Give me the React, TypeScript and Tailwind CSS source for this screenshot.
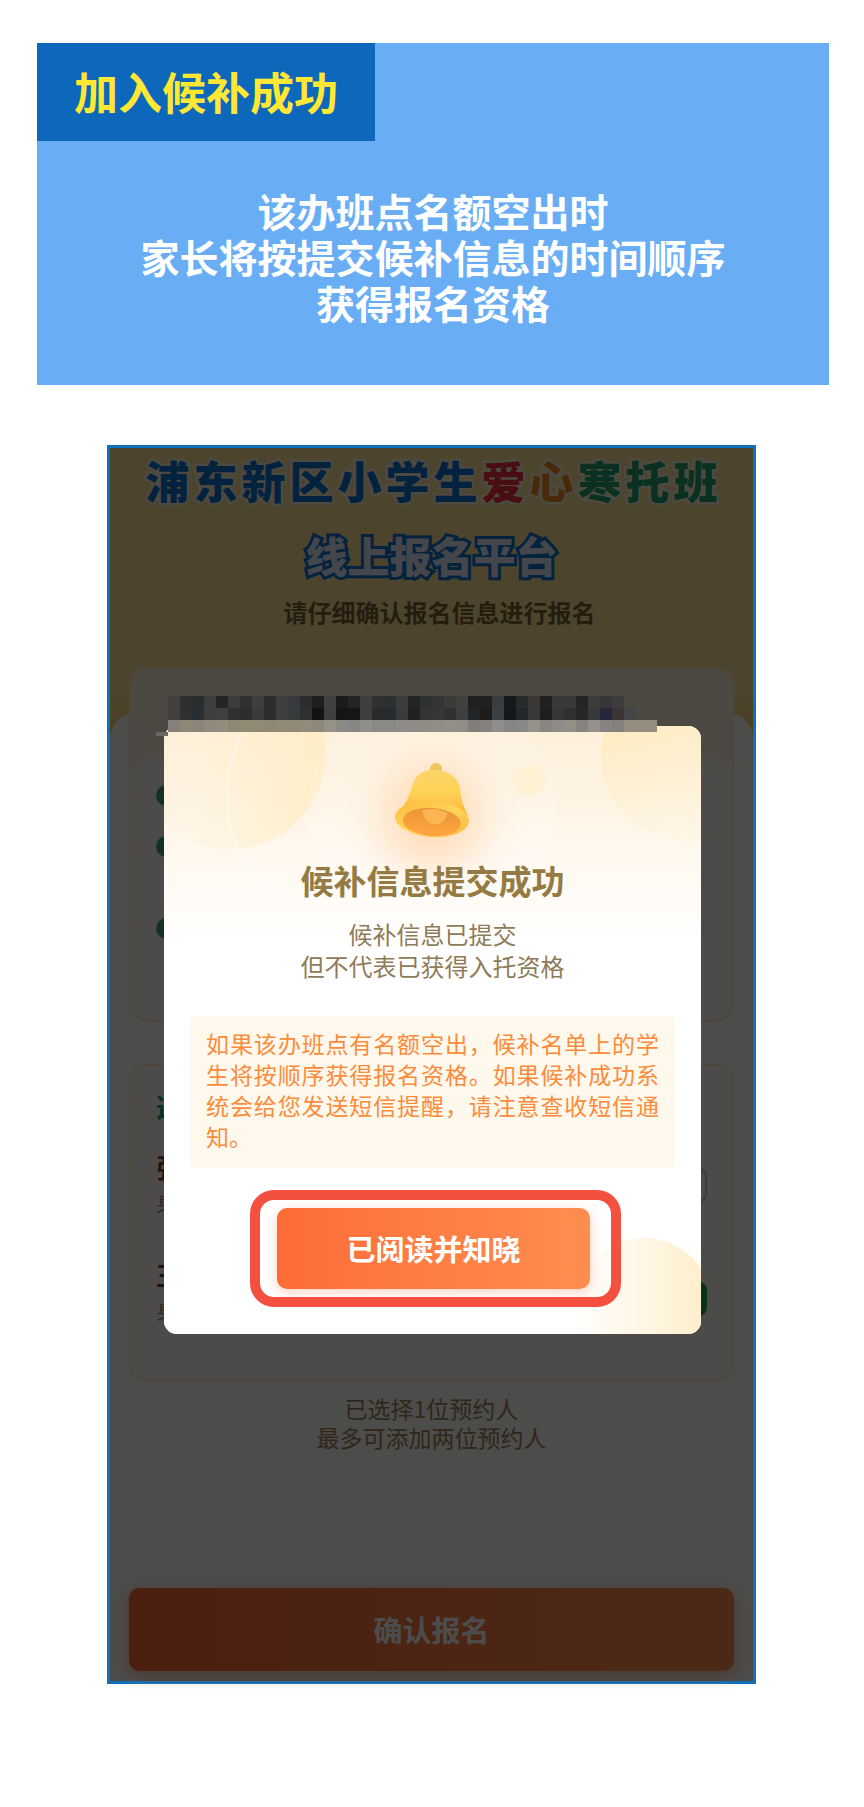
import { Check } from "lucide-react";

const SITE_TITLE: { char: string; color: string }[] = [
  { char: "浦", color: "text-[#0a72d0]" },
  { char: "东", color: "text-[#0a72d0]" },
  { char: "新", color: "text-[#0a72d0]" },
  { char: "区", color: "text-[#0a72d0]" },
  { char: "小", color: "text-[#0a72d0]" },
  { char: "学", color: "text-[#0a72d0]" },
  { char: "生", color: "text-[#0a72d0]" },
  { char: "爱", color: "text-[#f0303c]" },
  { char: "心", color: "text-[#f08a20]" },
  { char: "寒", color: "text-[#20a070]" },
  { char: "托", color: "text-[#20a070]" },
  { char: "班", color: "text-[#20a070]" },
];

const MOSAIC_ROWS: string[][] = [
  [
    "#434140", "#2f2e2d", "#282d30", "#3f3e3c", "#232426", "#3b3c3c", "#303030", "#403f3c", "#2c2d2e", "#3f3f3d",
    "#383b3d", "#2d2b2b", "#1f1f1f", "#434140", "#1c1b1b", "#242525", "#403e3c", "#303031", "#2b3033", "#3c3c3b",
    "#242424", "#2d3130", "#343434", "#3a3a39", "#41403d", "#1f2021", "#212121", "#3a3e40", "#17181a", "#282b2c",
    "#3a3735", "#212121", "#363a3c", "#3a3938", "#252526", "#3c3c3b", "#36373a", "#3c3c3e",
  ],
  [
    "#434140", "#31302f", "#272f34", "#403e3d", "#3d4144", "#31302f", "#2d2d2c", "#3d3b38", "#2b2d2f", "#403f3d",
    "#383b3d", "#30302f", "#131312", "#403f3e", "#161514", "#14171a", "#403e3c", "#272b2e", "#252b30", "#3a3b3a",
    "#202221", "#333434", "#383635", "#32312f", "#403f3d", "#20252a", "#201c1a", "#3a4043", "#151617", "#25282b",
    "#3a3837", "#1e1e1e", "#33373a", "#31302f", "#272727", "#38393a", "#242639", "#3b3536", "#444748",
  ],
  [
    "#84817c", "#8e8879", "#8a8578", "#908a7c", "#918b80", "#8d8775", "#908974", "#908974", "#8e8773", "#918a75",
    "#908976", "#918b7a", "#8e887b", "#949189", "#8b8a87", "#858686", "#918d88", "#8b8986", "#898988", "#8f8c88",
    "#8c8b88", "#908c85", "#918e88", "#928e88", "#928e87", "#827f7b", "#85827e", "#8f8d8b", "#858585", "#878787",
    "#96928a", "#898682", "#8d8c8b", "#949088", "#86837f", "#96918a", "#858483", "#828180", "#958e7e", "#958e7e", "#958e7e",
  ],
];

function BellIcon() {
  return (
    <svg width="80" height="80" viewBox="0 0 80 80" aria-hidden="true">
      <defs>
        <linearGradient id="bellBody" x1="0" y1="0" x2="0" y2="1">
          <stop offset="0" stopColor="#fbd46c" />
          <stop offset="0.5" stopColor="#fed354" />
          <stop offset="1" stopColor="#fdb03e" />
        </linearGradient>
        <linearGradient id="bellRim" x1="0" y1="0" x2="1" y2="1">
          <stop offset="0" stopColor="#fdb93c" />
          <stop offset="0.5" stopColor="#ffd457" />
          <stop offset="1" stopColor="#fdb53d" />
        </linearGradient>
        <linearGradient id="bellInner" x1="0" y1="0" x2="0" y2="1">
          <stop offset="0" stopColor="#ec9538" />
          <stop offset="1" stopColor="#ffa63f" />
        </linearGradient>
      </defs>
      <circle cx="43" cy="9" r="6" fill="#f2c45c" />
      <path d="M19 26C22 14 31 9 43 10C56 11 65 17 67 28C68 38 70 46 75 56L5 52C13 45 16 36 19 26Z" fill="url(#bellBody)" />
      <g transform="rotate(4 40 59)">
        <ellipse cx="39" cy="59" rx="37" ry="18" fill="url(#bellRim)" />
        <ellipse cx="39" cy="62" rx="29" ry="14" fill="url(#bellInner)" />
        <path d="M29 51Q40 47 54 52C53 60 48 64 42 64C35 64 30 59 29 51Z" fill="#fdb453" />
      </g>
    </svg>
  );
}

function DialogBackdrop() {
  return (
    <svg
      className="absolute inset-0 h-full w-full"
      viewBox="0 0 537 608"
      preserveAspectRatio="none"
      aria-hidden="true"
    >
      <defs>
        <linearGradient id="warm" x1="0" y1="0" x2="0" y2="1">
          <stop offset="0" stopColor="#fef0d9" />
          <stop offset="0.1" stopColor="#fef3e2" />
          <stop offset="0.24" stopColor="#fffaf2" />
          <stop offset="0.36" stopColor="#ffffff" />
        </linearGradient>
        <linearGradient id="discLeft" x1="0" y1="0" x2="1" y2="0">
          <stop offset="0.3" stopColor="#ffeecb" stopOpacity="0.1" />
          <stop offset="1" stopColor="#ffedc6" />
        </linearGradient>
        <linearGradient id="discRight" x1="0.3" y1="0.3" x2="0.5" y2="1">
          <stop offset="0" stopColor="#ffecc4" />
          <stop offset="1" stopColor="#fff2d8" stopOpacity="0.2" />
        </linearGradient>
        <linearGradient id="discBottom" x1="0" y1="0" x2="1" y2="0">
          <stop offset="0" stopColor="#ffeecb" stopOpacity="0" />
          <stop offset="0.95" stopColor="#ffeecb" />
        </linearGradient>
        <radialGradient id="bellGlow">
          <stop offset="0" stopColor="#ffcf9c" stopOpacity="0.9" />
          <stop offset="0.5" stopColor="#ffdcb8" stopOpacity="0.5" />
          <stop offset="0.8" stopColor="#ffe6cc" stopOpacity="0.12" />
          <stop offset="1" stopColor="#ffe6cc" stopOpacity="0" />
        </radialGradient>
      </defs>
      <rect width="537" height="608" fill="url(#warm)" />
      <circle cx="66" cy="27" r="96" fill="url(#discLeft)" />
      <circle cx="521" cy="31" r="84" fill="url(#discRight)" />
      <circle cx="365" cy="54" r="16" fill="#fff0cd" />
      <circle cx="268" cy="84" r="124" fill="#ffffff" fillOpacity="0.12" />
      <circle cx="268" cy="90" r="92" fill="url(#bellGlow)" />
      <path d="M82 0C48 60 60 128 110 172" fill="none" stroke="#ffffff" strokeOpacity="0.3" strokeWidth="3" />
      <circle cx="480" cy="581" r="69" fill="url(#discBottom)" />
    </svg>
  );
}

function Mosaic() {
  return (
    <svg className="absolute -top-[30px] -left-2" width="504" height="40" viewBox="-12 0 504 40" aria-hidden="true">
      <rect x="-12" y="36" width="12" height="4" fill="#6a6863" />
      {MOSAIC_ROWS.map((row, y) =>
        row.map((fill, x) => (
          <rect key={`${x}-${y}`} x={x * 12} y={y * 12} width={x === 40 ? 9 : 12} height="12" fill={fill} />
        )),
      )}
    </svg>
  );
}

function Notice() {
  return (
    <section className="bg-[#69aef5] pb-[60px]">
      <h1 className="flex h-[98px] w-fit items-center bg-[#0d67bb] px-[37px] pb-[3px] text-[44px] font-bold text-[#ffe833]">
        加入候补成功
      </h1>
      <p className="mt-[46px] text-center text-[39px] leading-[46px] font-bold text-white">
        该办班点名额空出时
        <br />
        家长将按提交候补信息的时间顺序
        <br />
        获得报名资格
      </p>
    </section>
  );
}

function SignupPage() {
  return (
    <div className="bg-[#fefefa]">
      <header className="h-[290px] bg-linear-to-b from-[#fde398] from-85% to-[#fdc870] pt-1 text-center">
        <h2 className="flex justify-center gap-1 text-[44px] leading-[56px] font-black">
          {SITE_TITLE.map(({ char, color }) => (
            <span key={char} className={`${color} [paint-order:stroke] [-webkit-text-stroke:5px_#fff3d8]`}>
              {char}
            </span>
          ))}
        </h2>
        <p className="mt-[19px] text-[42px] leading-[56px] font-black text-[#e4ecff] [paint-order:stroke] [-webkit-text-stroke:6px_#0a72d0]">
          线上报名平台
        </p>
        <p className="mt-3 pl-4 text-[24px] leading-[34px] font-bold text-[#80602c]">请仔细确认报名信息进行报名</p>
      </header>

      <main className="-mt-6 rounded-t-3xl bg-[#fefefa] px-[19px] pb-[10px]">
        <section className="relative -top-[47px] -mb-[47px] rounded-[20px] border-2 border-[#fdecd2] bg-[#fdf0dc] pt-[88px]">
          <div className="h-[263px] rounded-[18px] bg-[#fdfcf4] pt-7 pl-[25px]">
            <ul className="flex flex-col">
              <li className="h-[51px]">
                <span className="block size-[21px] rounded-full bg-[#40a878]" />
              </li>
              <li className="h-[82px]">
                <span className="block size-[21px] rounded-full bg-[#40a878]" />
              </li>
              <li>
                <span className="block size-[21px] rounded-full bg-[#40a878]" />
              </li>
            </ul>
          </div>
        </section>

        <section className="mt-[42px] h-[317px] rounded-[16px] border-2 border-[#fdecd2] bg-[#fdfcf6] px-[25px] pt-[23px]">
          <h3 className="text-[26px] leading-[34px] font-bold text-[#24a070]">选</h3>
          <div className="mt-[26px] flex items-center justify-between">
            <div>
              <p className="text-[26px] leading-[36px] font-bold text-[#80401c]">张</p>
              <p className="text-[20px] leading-[36px] text-[#a08c74]">身</p>
            </div>
            <span className="size-[34px] rounded-lg border-2 border-[#c8c8c4]" />
          </div>
          <div className="mt-9 flex items-center justify-between">
            <div>
              <p className="text-[26px] leading-[36px] font-bold text-[#80401c]">王</p>
              <p className="text-[20px] leading-[36px] text-[#a08c74]">身</p>
            </div>
            <span className="mt-3 flex size-[34px] items-center justify-center rounded-lg bg-[#24a064] text-white">
              <Check size={22} />
            </span>
          </div>
        </section>

        <p className="mt-[13px] text-center text-[23px] leading-[29px] text-[#a08058]">
          已选择1位预约人
          <br />
          最多可添加两位预约人
        </p>

        <button
          type="button"
          className="mt-[136px] h-[83px] w-full rounded-[10px] bg-linear-to-r from-[#fd6837] to-[#fd8c50] text-[29px] font-bold text-white shadow-[0_4px_16px_#fd6b3580]"
        >
          确认报名
        </button>
      </main>
    </div>
  );
}

function SuccessDialog() {
  return (
    <div className="absolute inset-0 bg-black/70 pt-[278px] pr-[52px] pl-[54px]">
      <div className="relative" role="dialog" aria-modal="true" aria-labelledby="dialog-title">
        <div className="relative overflow-hidden rounded-[13px] bg-white pb-[27px]">
          <DialogBackdrop />
          <div className="relative">
            <div className="flex justify-center pt-[34px]">
              <BellIcon />
            </div>
            <h2 id="dialog-title" className="mt-[20px] text-center text-[33px] leading-[40px] font-bold text-[#947a43]">
              候补信息提交成功
            </h2>
            <p className="mt-[18px] text-center text-[24px] leading-[32px] text-[#8e7b58]">
              候补信息已提交
              <br />
              但不代表已获得入托资格
            </p>
            <p className="mx-[26px] mt-[34px] rounded-md bg-[#fff9ed] px-[16px] pt-3 pb-4 text-justify text-[23px] leading-[31px] text-[#fc8b3c]">
              如果该办班点有名额空出，候补名单上的学生将按顺序获得报名资格。如果候补成功系统会给您发送短信提醒，请注意查收短信通知。
            </p>
            <div className="mt-[22px] mr-[80px] ml-[86px] rounded-3xl border-[10px] border-[#f4503f] py-2 pr-[21px] pl-[17px]">
              <button
                type="button"
                className="h-[81px] w-full rounded-[10px] bg-linear-to-r from-[#fd6c35] to-[#fe8d50] text-[29px] font-bold text-white shadow-[0_3px_12px_#fd6c3550]"
              >
                已阅读并知晓
              </button>
            </div>
          </div>
        </div>
        <Mosaic />
      </div>
    </div>
  );
}

export default function App() {
  return (
    <div className="bg-white pt-[43px] pr-[35px] pb-[123px] pl-[37px] font-['Noto_Sans_CJK_SC','Noto_Sans',sans-serif]">
      <Notice />
      <div className="relative mt-[60px] mr-[73px] ml-[70px] border-3 border-[#0f6fb8]">
        <SignupPage />
        <SuccessDialog />
      </div>
    </div>
  );
}
